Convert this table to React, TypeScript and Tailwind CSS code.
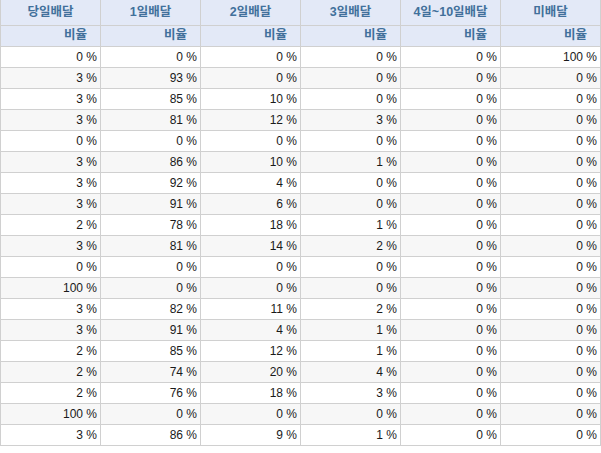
const headers = ['당일배달', '1일배달', '2일배달', '3일배달', '4일~10일배달', '미배달'];

const rows: number[][] = [
  [0, 0, 0, 0, 0, 100],
  [3, 93, 0, 0, 0, 0],
  [3, 85, 10, 0, 0, 0],
  [3, 81, 12, 3, 0, 0],
  [0, 0, 0, 0, 0, 0],
  [3, 86, 10, 1, 0, 0],
  [3, 92, 4, 0, 0, 0],
  [3, 91, 6, 0, 0, 0],
  [2, 78, 18, 1, 0, 0],
  [3, 81, 14, 2, 0, 0],
  [0, 0, 0, 0, 0, 0],
  [100, 0, 0, 0, 0, 0],
  [3, 82, 11, 2, 0, 0],
  [3, 91, 4, 1, 0, 0],
  [2, 85, 12, 1, 0, 0],
  [2, 74, 20, 4, 0, 0],
  [2, 76, 18, 3, 0, 0],
  [100, 0, 0, 0, 0, 0],
  [3, 86, 9, 1, 0, 0],
];

export default function App() {
  return (
    <div className="w-[601px] h-[453px] bg-white overflow-hidden font-['Liberation_Sans','Noto_Sans_CJK_KR',sans-serif]">
      <table className="w-[601px] border-collapse table-fixed text-[12px]">
        <colgroup>
          {headers.map((h) => (
            <col key={h} className="w-[100px]" />
          ))}
        </colgroup>
        <thead>
          <tr className="h-[25px] bg-[#e3e9f7]">
            {headers.map((h) => (
              <th key={h} className="border-x border-b border-[#d0d0d0] text-center font-bold text-[12.5px] text-[#41709b] p-0">
                {h}
              </th>
            ))}
          </tr>
          <tr className="h-[21px] bg-[#e3e9f7]">
            {headers.map((h) => (
              <th key={h} className="border border-[#d0d0d0] text-right font-bold text-[12.5px] text-[#41709b] p-0 pr-[13px]">
                비율
              </th>
            ))}
          </tr>
        </thead>
        <tbody>
          {rows.map((r, ri) => (
            <tr key={ri} className={`h-[21px] ${ri % 2 === 1 ? 'bg-[#f7f7f7]' : 'bg-white'}`}>
              {r.map((v, ci) => (
                <td key={ci} className="border border-[#d0d0d0] text-right text-[#1a1a1a] p-0 pr-[3px]">
                  {v} %
                </td>
              ))}
            </tr>
          ))}
        </tbody>
      </table>
    </div>
  );
}
